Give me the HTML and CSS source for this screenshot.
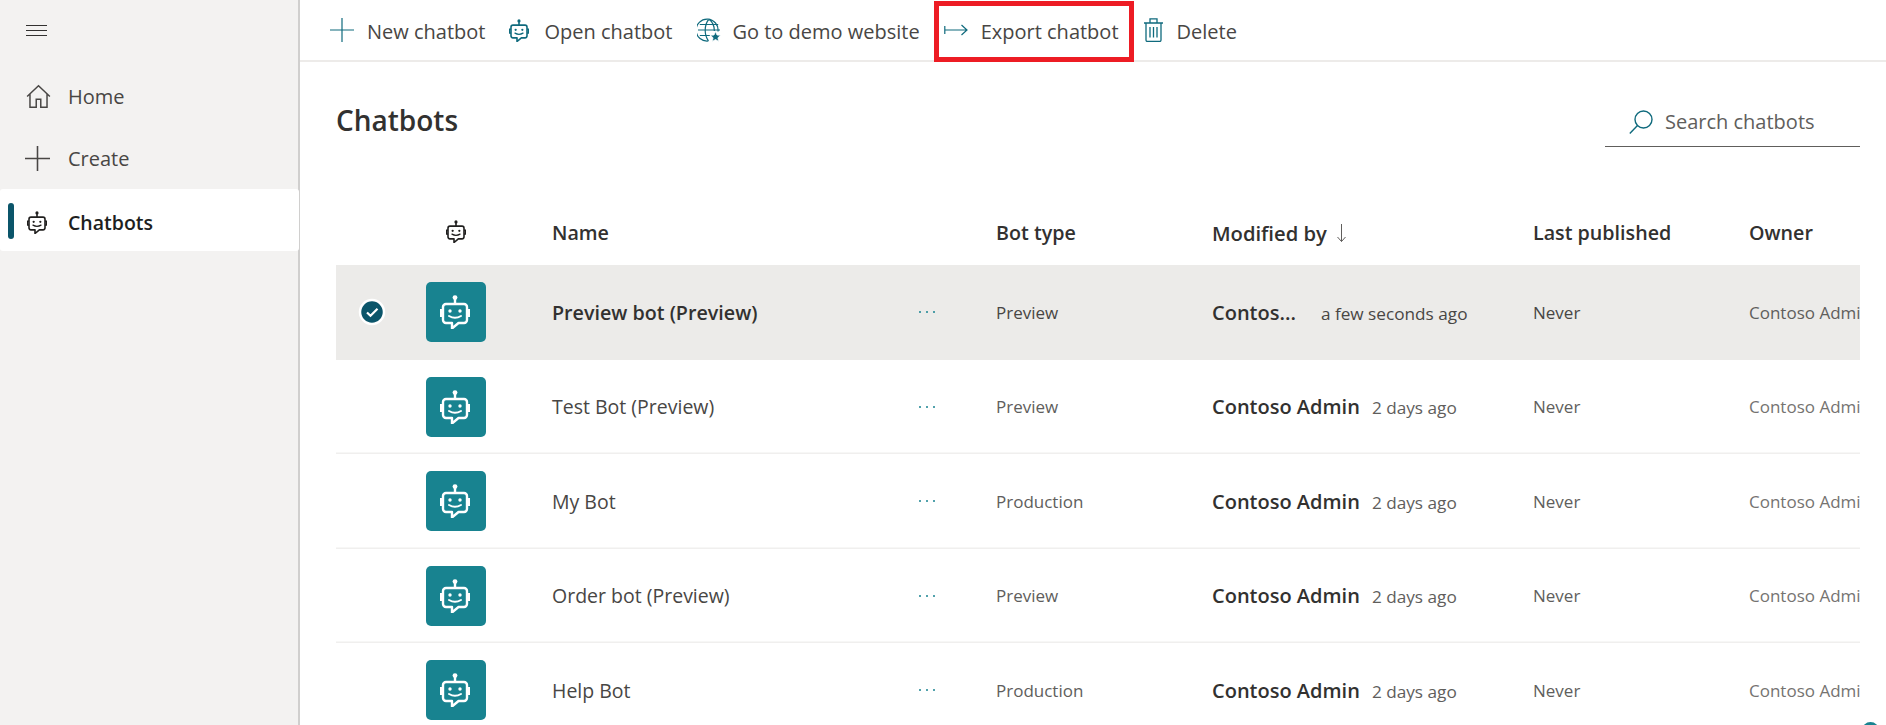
FILE: index.html
```html
<!DOCTYPE html>
<html lang="en">
<head>
<meta charset="utf-8">
<title>Chatbots</title>
<link rel="stylesheet" href="styles.css">
</head>
<body>
<svg class="defs" width="0" height="0" aria-hidden="true">
  <symbol id="bot" viewBox="0 0 30 34">
    <circle cx="15" cy="2.6" r="2.4" fill="currentColor"/>
    <path d="M15 4v5M6 9h18a3 3 0 0 1 3 3v13a3 3 0 0 1-3 3h-5.500L12 33.500V28H6a3 3 0 0 1-3-3V12a3 3 0 0 1 3-3Z" fill="none" stroke="currentColor" stroke-width="2.400" stroke-linejoin="round"/>
    <path d="M3 15H1v6h2M27 15h2v6h-2" fill="none" stroke="currentColor" stroke-width="2"/>
    <circle cx="10" cy="16" r="1.700" fill="currentColor"/>
    <circle cx="20" cy="16" r="1.700" fill="currentColor"/>
    <path d="M9 21q6 3.500 12 0" fill="none" stroke="currentColor" stroke-width="2" stroke-linecap="round"/>
  </symbol>
</svg>

<aside class="sidebar">
  <button class="menu-btn" aria-label="Menu">
    <svg class="hamburger" viewBox="0 0 21 11"><path d="M0 .5h21M0 5.500h21M0 10.500h21"/></svg>
  </button>
  <nav class="nav">
    <a class="nav-item">
      <svg class="nav-icon" viewBox="0 0 22 22"><path d="M1 11 11 1.500 21 11M3.500 9v11.500h5.500v-7h4v7h5.500V9"/></svg>
      <span>Home</span>
    </a>
    <a class="nav-item">
      <svg class="nav-icon plus" viewBox="0 0 24 24"><path d="M12 0v24M0 12h24"/></svg>
      <span>Create</span>
    </a>
    <a class="nav-item active">
      <svg class="nav-bot"><use href="#bot"/></svg>
      <span>Chatbots</span>
    </a>
  </nav>
</aside>

<div class="main">
  <header class="toolbar">
    <button class="tool tool-new">
      <svg class="tool-icon" viewBox="0 0 24 24"><path d="M12 0v24M0 12h24"/></svg>
      <span>New chatbot</span>
    </button>
    <button class="tool tool-open">
      <svg class="tool-bot"><use href="#bot"/></svg>
      <span>Open chatbot</span>
    </button>
    <button class="tool tool-demo">
      <svg class="tool-icon" viewBox="0 0 24 24">
        <path d="M21 13.500A11 11 0 1 0 11.500 23M1 12h22M2.800 6.500h18.400M2.800 17.500h10M12 1C7 7 7 17 11.500 23M12 1c4 3.500 5.500 8 5.300 12"/>
        <path class="star" d="m18.500 13.500 1.500 3.500 3.800.3-2.900 2.500.9 3.700-3.300-2-3.300 2 .9-3.700-2.900-2.500 3.800-.3Z"/>
      </svg>
      <span>Go to demo website</span>
    </button>
    <button class="tool tool-export">
      <svg class="tool-icon" viewBox="0 0 24 24"><path d="M.8 8v8M1 12h22M17.500 7l5.500 5-5.500 5"/></svg>
      <span>Export chatbot</span>
    </button>
    <button class="tool tool-delete">
      <svg class="tool-trash" viewBox="0 0 19 24"><path d="M0 5h19M6 5V.8h7V5M2 5v17a1.500 1.500 0 0 0 1.500 1.500h12A1.500 1.500 0 0 0 17 22V5M6 9v10.500M9.500 9v10.500M13 9v10.500"/></svg>
      <span>Delete</span>
    </button>
    <div class="highlight"></div>
  </header>

  <section class="content">
    <div class="title-row">
      <h1>Chatbots</h1>
      <div class="search">
        <svg class="search-icon" viewBox="0 0 24 24"><path d="M8.500 15.500.8 23.500"/><circle cx="14.500" cy="9.500" r="8.500"/></svg>
        <span>Search chatbots</span>
      </div>
    </div>

    <div class="row head">
      <div></div>
      <div class="head-bot"><svg class="nav-bot"><use href="#bot"/></svg></div>
      <div>Name</div>
      <div></div>
      <div>Bot type</div>
      <div class="sort">Modified by <svg class="arrow" viewBox="0 0 9 18"><path d="M4.500 0v17.500M.5 13l4 4.500 4-4.500"/></svg></div>
      <div>Last published</div>
      <div>Owner</div>
    </div>

    <div class="row item selected">
      <div class="check"><svg viewBox="0 0 30 30"><circle cx="15" cy="15" r="12" class="check-disc"/><path d="m10 15.500 3.500 3.300 7-7" class="check-tick"/></svg></div>
      <div class="tile"><svg><use href="#bot"/></svg></div>
      <div class="name">Preview bot (Preview)</div>
      <div class="dots"><svg viewBox="0 0 18 4"><circle cx="2" cy="2" r="1"/><circle cx="9" cy="2" r="1"/><circle cx="16" cy="2" r="1"/></svg></div>
      <div class="muted">Preview</div>
      <div class="mod"><span class="who who-short">Contos...</span><span class="when">a few seconds ago</span></div>
      <div class="muted">Never</div>
      <div class="owner">Contoso Admin</div>
    </div>

    <div class="row item">
      <div></div>
      <div class="tile"><svg><use href="#bot"/></svg></div>
      <div class="name">Test Bot (Preview)</div>
      <div class="dots"><svg viewBox="0 0 18 4"><circle cx="2" cy="2" r="1"/><circle cx="9" cy="2" r="1"/><circle cx="16" cy="2" r="1"/></svg></div>
      <div class="muted">Preview</div>
      <div class="mod"><span class="who">Contoso Admin</span><span class="when">2 days ago</span></div>
      <div class="muted">Never</div>
      <div class="owner">Contoso Admin</div>
    </div>

    <div class="row item">
      <div></div>
      <div class="tile"><svg><use href="#bot"/></svg></div>
      <div class="name">My Bot</div>
      <div class="dots"><svg viewBox="0 0 18 4"><circle cx="2" cy="2" r="1"/><circle cx="9" cy="2" r="1"/><circle cx="16" cy="2" r="1"/></svg></div>
      <div class="muted">Production</div>
      <div class="mod"><span class="who">Contoso Admin</span><span class="when">2 days ago</span></div>
      <div class="muted">Never</div>
      <div class="owner">Contoso Admin</div>
    </div>

    <div class="row item">
      <div></div>
      <div class="tile"><svg><use href="#bot"/></svg></div>
      <div class="name">Order bot (Preview)</div>
      <div class="dots"><svg viewBox="0 0 18 4"><circle cx="2" cy="2" r="1"/><circle cx="9" cy="2" r="1"/><circle cx="16" cy="2" r="1"/></svg></div>
      <div class="muted">Preview</div>
      <div class="mod"><span class="who">Contoso Admin</span><span class="when">2 days ago</span></div>
      <div class="muted">Never</div>
      <div class="owner">Contoso Admin</div>
    </div>

    <div class="row item">
      <div></div>
      <div class="tile"><svg><use href="#bot"/></svg></div>
      <div class="name">Help Bot</div>
      <div class="dots"><svg viewBox="0 0 18 4"><circle cx="2" cy="2" r="1"/><circle cx="9" cy="2" r="1"/><circle cx="16" cy="2" r="1"/></svg></div>
      <div class="muted">Production</div>
      <div class="mod"><span class="who">Contoso Admin</span><span class="when">2 days ago</span></div>
      <div class="muted">Never</div>
      <div class="owner">Contoso Admin</div>
    </div>
  </section>
</div>
<div class="fab"></div>
</body>
</html>
```

FILE: styles.css
```css
* { box-sizing: border-box; }
html, body { height: 100%; }
body {
  margin: 0;
  height: 725px;
  overflow: hidden;
  display: flex;
  background: #fff;
  color: #323130;
  font-family: "Open Sans", "Noto Sans", sans-serif;
  font-size: 20px;
}
.defs { position: absolute; }
button { font: inherit; color: inherit; background: none; border: 0; padding: 0; }
svg { display: block; flex: none; }

.sidebar {
  width: 300px;
  flex: none;
  background: #f3f2f1;
  border-right: 2px solid #d0cfce;
}
.menu-btn { display: flex; align-items: flex-start; padding: 25px 0 0 26px; height: 65px; }
.hamburger { width: 21px; height: 11px; fill: none; stroke: #323130; stroke-width: 1; }
.nav { display: flex; flex-direction: column; }
.nav-item {
  height: 62px;
  display: flex;
  align-items: center;
  padding-left: 25px;
  color: #484644;
  position: relative;
}
.nav-item span { margin-left: 18px; }
.nav-icon { width: 25px; height: 25px; fill: none; stroke: #484644; stroke-width: 1.300; }
.nav-icon.plus { stroke-width: 1.500; }
.nav-item:first-child { padding-left: 26px; }
.nav-item:first-child span { margin-left: 17px; }
.nav-item.active {
  background: #fff;
  color: #201f1e;
  font-size: 19.500px;
  font-weight: 600;
  border-radius: 3px;
  padding-left: 27px;
  padding-top: 4px;
  margin-right: -1px;
}
.nav-item.active span { margin-left: 21px; }
.nav-item.active::before {
  content: "";
  position: absolute;
  left: 8px;
  top: 14px;
  width: 6px;
  height: 36px;
  border-radius: 3px;
  background: #0b556a;
}
.nav-bot { width: 20px; height: 23px; color: #201f1e; }

.main { flex: 1; min-width: 0; }
.toolbar {
  height: 62px;
  border-bottom: 2px solid #edebe9;
  display: flex;
  align-items: center;
  padding-left: 30px;
  position: relative;
}
.tool { display: flex; align-items: center; color: #484644; white-space: nowrap; }
.tool span { margin-left: 13px; position: relative; top: 1px; }
.tool-icon { width: 24px; height: 24px; fill: none; stroke: #0f6a7d; stroke-width: 1.200; }
.tool-icon .star { fill: #0f6a7d; stroke: #fff; stroke-width: .8; }
.tool-bot { width: 20px; height: 23px; color: #0f6a7d; }
.tool-trash { width: 19px; height: 24px; fill: none; stroke: #0f6a7d; stroke-width: 1.300; }
.tool-new { margin-right: 24px; }
.tool-open span { margin-left: 15px; }
.tool-open { margin-right: 25px; }
.tool-demo { margin-right: 24px; }
.tool-demo span { margin-left: 11px; }
.tool-export { margin-right: 25px; }
.tool-delete span { margin-left: 14px; }
.highlight {
  position: absolute;
  left: 634px;
  top: 1px;
  width: 200px;
  height: 61px;
  border: 5px solid #ed1c24;
}

.content { padding: 0 26px 0 36px; }
.title-row {
  height: 84px;
  display: flex;
  align-items: flex-end;
  justify-content: space-between;
}
h1 { margin: 40px 0 0; font-size: 28px; line-height: 36px; font-weight: 600; color: #323130; align-self: flex-start; }
.search {
  width: 255px;
  height: 56px;
  border-bottom: 1.500px solid #605e5c;
  display: flex;
  align-items: center;
  padding: 6px 0 0 24px;
  color: #605e5c;
  margin-bottom: -1px;
}
.search span { margin-left: 12px; }
.search-icon { width: 24px; height: 24px; fill: none; stroke: #0f6a7d; stroke-width: 1.400; }

.row {
  display: grid;
  grid-template-columns: 72px 144px 366px 78px 216px 321px 216px 111px;
  align-items: center;
  white-space: nowrap;
}
.head {
  height: 119px;
  padding-top: 58px;
  padding-bottom: 4px;
  font-weight: 600;
  font-size: 19.700px;
  color: #323130;
}
.head-bot { padding-left: 38px; }
.head-bot .nav-bot { margin-top: -3px; }
.sort { display: flex; align-items: center; font-size: 20.200px; }
.arrow { width: 9px; height: 18px; fill: none; stroke: #605e5c; stroke-width: 1; margin-left: 10px; }

.item {
  height: 94.500px;
  box-shadow: inset 0 -1.500px 0 #f0efee;
  font-size: 17px;
  color: #605e5c;
}
.selected { background: #ecebe9; color: #484644; box-shadow: none; }
.check { padding-left: 21px; }
.check svg { width: 30px; height: 30px; }
.check-disc { fill: #0b556a; stroke: #fff; stroke-width: 2.500; }
.check-tick { fill: none; stroke: #fff; stroke-width: 2.200; }
.tile {
  width: 60px;
  height: 60px;
  margin-left: 18px;
  padding-right: 2px;
  border-radius: 5px;
  background: #188390;
  color: #fff;
  display: flex;
  align-items: center;
  justify-content: center;
}
.tile svg { width: 30px; height: 34px; }
.name { font-size: 19.500px; color: #484644; }
.selected .name { font-weight: 600; font-size: 19.700px; color: #323130; }
.dots svg { width: 18px; height: 4px; fill: #188390; }
.mod { display: flex; align-items: baseline; }
.who { font-size: 20px; font-weight: 600; color: #323130; margin-right: 12px; }
.who-short { margin-right: 25px; }
.when { font-size: 17.200px; }
.owner { overflow: hidden; color: #757371; }
.selected .owner { color: #605e5c; }

.fab {
  position: absolute;
  left: 1862px;
  top: 722px;
  width: 17px;
  height: 17px;
  border-radius: 50%;
  background: #188390;
}
```
